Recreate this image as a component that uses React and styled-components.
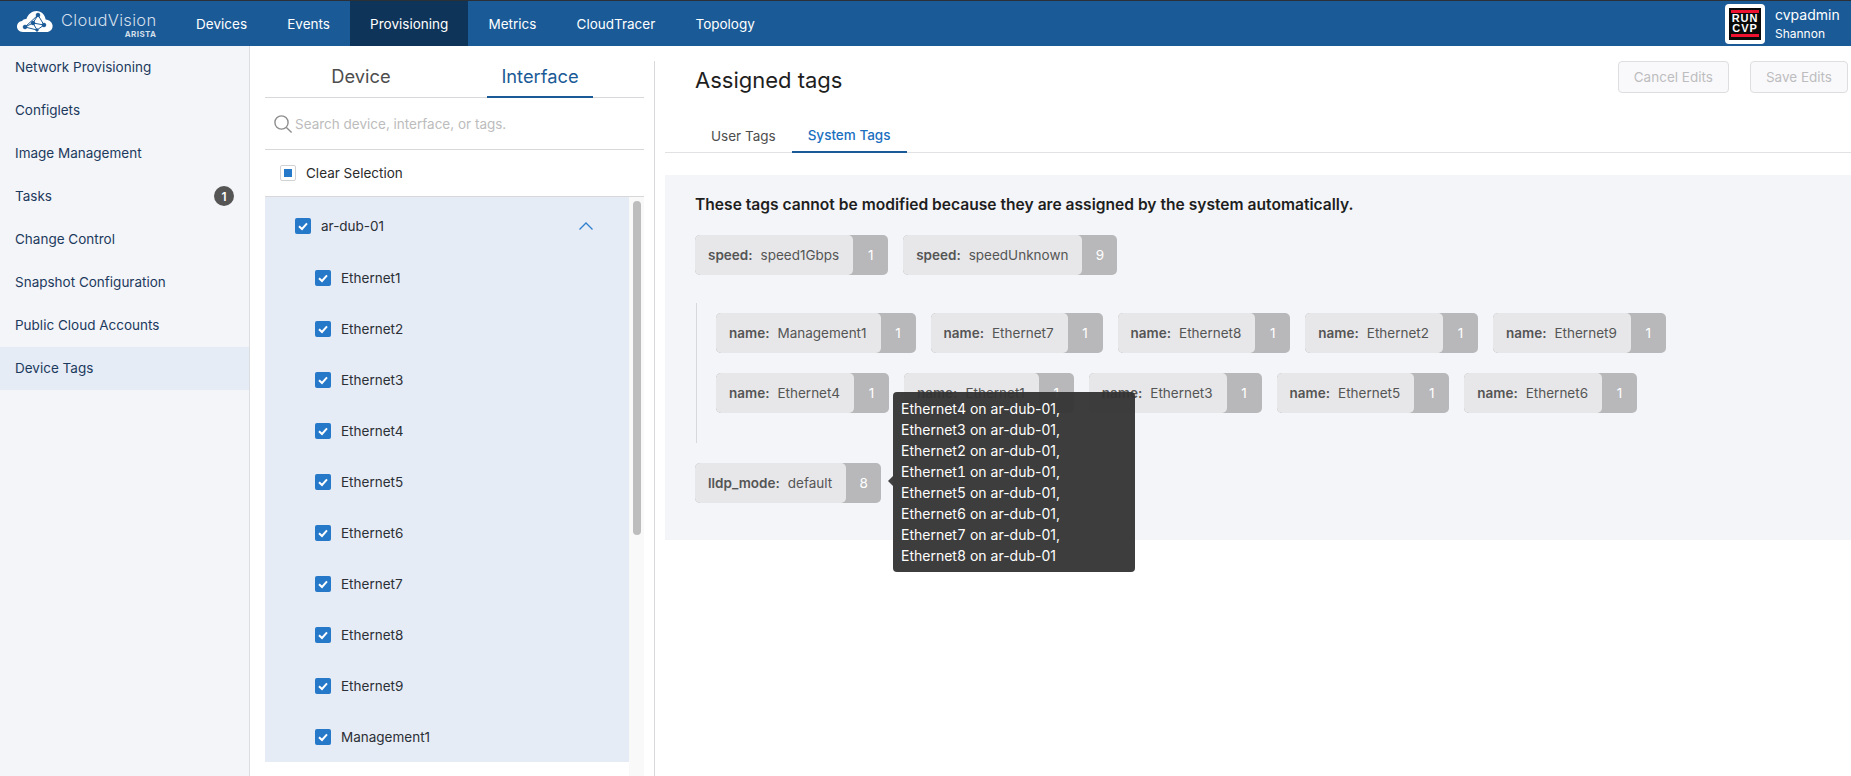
import React from "react";
import styled, { createGlobalStyle } from "styled-components";

const GlobalStyle = createGlobalStyle`
    * {
        box-sizing: border-box;
    }

    body {
        margin: 0;
        background: #fff;
        font-family: Inter, "Liberation Sans", sans-serif;
        overflow: hidden;
    }
`;

const Page = styled.div`
    width: 1851px;
    height: 776px;
    display: flex;
    flex-direction: column;
    overflow: hidden;
`;

const TopBar = styled.header`
    height: 46px;
    flex: none;
    display: flex;
    align-items: stretch;
    background: #1a5a96;
    border-top: 1px solid #2b2f36;
`;

const Logo = styled.div`
    width: 176px;
    flex: none;
    display: flex;
    padding: 9px 0 0 17px;
    gap: 8px;
`;

const LogoText = styled.div`
    display: flex;
    flex-direction: column;
    align-items: flex-end;
    color: #d3dfeb;

    .cloud {
        font-size: 16.5px;
        font-weight: 300;
        line-height: 20px;
        letter-spacing: 0.3px;
    }

    .arista {
        font-size: 8px;
        font-weight: 700;
        line-height: 8px;
        letter-spacing: 0.4px;
    }
`;

const NavItem = styled.a`
    display: flex;
    align-items: center;
    padding: 0 20.1px;
    color: #fff;
    font-size: 13.5px;
    background: ${(props) => (props.$active ? "#0f3459" : "transparent")};
`;

const User = styled.div`
    margin-left: auto;
    width: 126px;
    display: flex;
    align-items: center;
    gap: 10px;
    color: #fff;
`;

const Avatar = styled.div`
    width: 40px;
    height: 40px;
    border-radius: 4px;
    background: #fff;
    padding: 4px;
    flex: none;
`;

const AvatarInner = styled.div`
    width: 100%;
    height: 100%;
    background: #0a0a0a;
    padding: 2px;
    display: flex;
    flex-direction: column;
    align-items: center;
    justify-content: space-between;
    font-family: "Liberation Sans", sans-serif;
    font-size: 11px;
    font-weight: 700;
    line-height: 9px;
    letter-spacing: 0.9px;

    i {
        display: block;
        flex: none;
        width: 100%;
        height: 3px;
        background: #ee1230;
    }
`;

const UserName = styled.div`
    font-size: 14px;
    line-height: 19px;
`;

const UserOrg = styled.div`
    font-size: 12px;
    line-height: 19px;
`;

const Body = styled.div`
    flex: 1;
    min-height: 0;
    display: flex;
`;

const SideNav = styled.nav`
    width: 250px;
    flex: none;
    background: #f4f5f8;
    border-right: 1px solid #dcdde0;
`;

const SideItem = styled.div`
    height: 43px;
    display: flex;
    align-items: center;
    justify-content: space-between;
    padding: 0 15px 1px;
    color: #1c3a5e;
    font-size: 13.5px;
    background: ${(props) => (props.$active ? "#e6ecf5" : "transparent")};
`;

const Badge = styled.span`
    width: 20px;
    height: 20px;
    border-radius: 50%;
    background: #555;
    color: #fff;
    font-size: 12px;
    font-weight: 600;
    display: flex;
    align-items: center;
    justify-content: center;
`;

const Picker = styled.section`
    width: 405px;
    flex: none;
    margin-top: 15px;
    padding: 0 10px 0 15px;
    border-right: 1px solid #d8d8da;
    display: flex;
    flex-direction: column;
`;

const PickerTabs = styled.div`
    height: 37px;
    flex: none;
    display: flex;
    border-bottom: 1px solid #d8d8da;
    padding-left: 43px;
`;

const PickerTab = styled.div`
    width: 106px;
    margin-right: 73px;
    height: 37px;
    text-align: center;
    font-size: 18.3px;
    line-height: 30px;
    color: ${(props) => (props.$active ? "#1a5a96" : "#4d4d4d")};
    border-bottom: ${(props) => (props.$active ? "2px solid #1a5a96" : "none")};

    &:last-child {
        margin-right: 0;
    }
`;

const SearchRow = styled.div`
    height: 52px;
    flex: none;
    display: flex;
    align-items: center;
    gap: 2px;
    padding-left: 8px;
    border-bottom: 1px solid #d8d8da;
    color: #bcbcbc;
    font-size: 13.5px;
`;

const ClearRow = styled.div`
    height: 47px;
    flex: none;
    display: flex;
    align-items: center;
    gap: 10px;
    padding: 0 0 1px 15px;
    border-bottom: 1px solid #d8d8da;
    color: #2b2b2b;
    font-size: 13.5px;
`;

const PartialBox = styled.span`
    width: 16px;
    height: 16px;
    background: #fff;
    border: 1px solid #d2d2d4;
    border-radius: 2px;
    display: flex;
    align-items: center;
    justify-content: center;

    &::after {
        content: "";
        width: 8px;
        height: 8px;
        background: #2678c8;
    }
`;

const ListArea = styled.div`
    flex: none;
    display: flex;
    height: 579px;
`;

const List = styled.div`
    width: 364px;
    height: 565px;
    background: #e6ecf5;
    flex: none;
`;

const HostRow = styled.div`
    height: 55px;
    display: flex;
    align-items: center;
    gap: 10px;
    padding: 3px 36px 0 30px;
    color: #2b2f36;
    font-size: 13.5px;

    svg:last-child {
        margin-left: auto;
    }
`;

const PortRow = styled.div`
    height: 51px;
    display: flex;
    align-items: center;
    gap: 10px;
    padding-left: 50px;
    color: #2b2f36;
    font-size: 13.5px;
`;

const Track = styled.div`
    width: 15px;
    flex: none;
    background: #f9f9fa;
    padding: 4px 3px 0 4px;
`;

const Thumb = styled.div`
    height: 334px;
    border-radius: 4px;
    background: #bdbdbd;
`;

const Main = styled.main`
    flex: 1;
    min-width: 0;
    padding: 15px 0 0 10px;
`;

const TitleRow = styled.div`
    height: 38px;
    display: flex;
    align-items: center;
    padding: 0 3px 0 30px;
    gap: 21px;
`;

const Title = styled.h1`
    margin: 0 auto 0 0;
    font-size: 22px;
    font-weight: 400;
    color: #1e1e1e;
`;

const GhostButton = styled.button`
    height: 32px;
    margin-bottom: 7px;
    padding: 0 15px;
    border: 1px solid #dedee0;
    border-radius: 4px;
    background: #f9f9fb;
    color: #bdbdbf;
    font-family: inherit;
    font-size: 13.5px;
`;

const TabBar = styled.div`
    height: 41px;
    margin-top: 13px;
    padding-left: 30px;
    display: flex;
    border-bottom: 1px solid #e2e2e4;
`;

const Tab = styled.div`
    height: 41px;
    padding: 7px 16px 0;
    display: flex;
    align-items: center;
    font-size: 13.5px;
    color: ${(props) => (props.$active ? "#1a6fc0" : "#4d4d4d")};
    border-bottom: ${(props) => (props.$active ? "2px solid #1a5a96" : "none")};
    font-weight: ${(props) => (props.$active ? 500 : 400)};
`;

const Panel = styled.div`
    position: relative;
    height: 365px;
    margin-top: 22px;
    padding: 20px 30px 0;
    background: #f4f5f8;
`;

const Notice = styled.p`
    margin: 0 0 20px;
    font-size: 15.6px;
    font-weight: 600;
    line-height: 20px;
    color: #1e1e1e;
`;

const ChipRow = styled.div`
    display: flex;
    gap: 15px;
`;

const Group = styled.div`
    margin: 28px 0 20px 1px;
    height: 140px;
    padding: 10px 0 0 19px;
    border-left: 1px solid #d8d8da;
    display: flex;
    flex-direction: column;
    gap: 20px;
`;

const Chip = styled.div`
    height: 40px;
    display: inline-flex;
    border-radius: 5px;
    background: #b8b8ba;
    color: #555;
    font-size: 13.5px;
    overflow: hidden;
`;

const ChipLabel = styled.span`
    display: flex;
    align-items: center;
    padding: 0 14px 0 13px;
    border-radius: 5px;
    background: #e7e7e9;

    b {
        font-weight: 600;
        margin-right: 8px;
    }
`;

const Count = styled.span`
    width: 35px;
    color: #fff;
    display: flex;
    align-items: center;
    justify-content: center;
`;

const Tooltip = styled.div`
    position: absolute;
    left: 228px;
    top: 217px;
    width: 242px;
    height: 180px;
    padding: 6px 8px;
    border-radius: 4px;
    background: rgba(51, 51, 51, 0.95);
    color: #fff;
    font-size: 14px;
    line-height: 21px;

    &::before {
        content: "";
        position: absolute;
        left: -5px;
        top: 84px;
        border-style: solid;
        border-width: 5px 5px 5px 0;
        border-color: transparent #404040 transparent transparent;
    }
`;

const TooltipDigit = styled.span`
    font-variant-numeric: tabular-nums;
`;

const Check = () => (
    <svg width="16" height="16" viewBox="0 0 16 16" style={{ flex: "none" }}>
        <rect width="16" height="16" rx="2" fill="#2678c8" />
        <path d="M4 8.2 L7 11 L12 5.4" fill="none" stroke="#fff" strokeWidth="2" />
    </svg>
);

const SearchIcon = () => (
    <svg width="20" height="20" viewBox="0 0 20 20" fill="none" stroke="#8e8e8e" strokeWidth="1.4">
        <circle cx="8.5" cy="8.5" r="6.6" />
        <path d="M13.4 13.4 L18.6 18.6" />
    </svg>
);

const Chevron = () => (
    <svg width="14" height="8" viewBox="0 0 14 8" fill="none" stroke="#2f7fcf" strokeWidth="1.3">
        <path d="M0.5 7.5 L7 1 L13.5 7.5" />
    </svg>
);

const CloudLogo = () => (
    <svg width="36" height="24" viewBox="0 0 36 24" style={{ flex: "none" }}>
        <path
            d="M6 22 C1.5 22 0 18.8 0 16.5 C0 13.5 2.3 11.2 5 11 C6 9.5 7.6 8.8 9.4 9 C11 4 15 1 19.5 1 C24.5 1 28 4.8 28.6 9.4 C32.6 9.8 35.6 12.6 35.6 16 C35.6 19.5 33 22 29.5 22 Z"
            fill="#fff"
        />
        <g stroke="#1a5a96" strokeWidth="1" fill="#1a5a96">
            <path d="M8 17 L16 13 L21 5 L27 15 L16 13 M21 5 L8 17 M16 13 L20 20 L27 15 M8 17 L20 20" fill="none" />
            <circle cx="8" cy="17" r="1.8" />
            <circle cx="16" cy="13" r="1.8" />
            <circle cx="21" cy="5" r="1.8" />
            <circle cx="27" cy="15" r="1.8" />
            <circle cx="20" cy="20" r="1.2" />
        </g>
    </svg>
);

const navItems = ["Devices", "Events", "Provisioning", "Metrics", "CloudTracer", "Topology"];

const sideItems = [
    "Network Provisioning",
    "Configlets",
    "Image Management",
    "Tasks",
    "Change Control",
    "Snapshot Configuration",
    "Public Cloud Accounts",
    "Device Tags",
];

const ports = [
    "Ethernet1",
    "Ethernet2",
    "Ethernet3",
    "Ethernet4",
    "Ethernet5",
    "Ethernet6",
    "Ethernet7",
    "Ethernet8",
    "Ethernet9",
    "Management1",
];

const nameRows = [
    ["Management1", "Ethernet7", "Ethernet8", "Ethernet2", "Ethernet9"],
    ["Ethernet4", "Ethernet1", "Ethernet3", "Ethernet5", "Ethernet6"],
];

const tooltipPorts = [4, 3, 2, 1, 5, 6, 7, 8];

function Tag({ name, value, count }) {
    return (
        <Chip>
            <ChipLabel>
                <b>{name}:</b>
                {value}
            </ChipLabel>
            <Count>{count}</Count>
        </Chip>
    );
}

function App() {
    return (
        <Page>
            <GlobalStyle />
            <TopBar>
                <Logo>
                    <CloudLogo />
                    <LogoText>
                        <span className="cloud">CloudVision</span>
                        <span className="arista">ARISTA</span>
                    </LogoText>
                </Logo>
                {navItems.map((item) => (
                    <NavItem key={item} $active={item === "Provisioning"}>
                        {item}
                    </NavItem>
                ))}
                <User>
                    <Avatar>
                        <AvatarInner>
                            <i />
                            <span>RUN</span>
                            <span>CVP</span>
                            <i />
                        </AvatarInner>
                    </Avatar>
                    <div>
                        <UserName>cvpadmin</UserName>
                        <UserOrg>Shannon</UserOrg>
                    </div>
                </User>
            </TopBar>
            <Body>
                <SideNav>
                    {sideItems.map((item) => (
                        <SideItem key={item} $active={item === "Device Tags"}>
                            {item}
                            {item === "Tasks" ? <Badge>1</Badge> : null}
                        </SideItem>
                    ))}
                </SideNav>
                <Picker>
                    <PickerTabs>
                        <PickerTab>Device</PickerTab>
                        <PickerTab $active>Interface</PickerTab>
                    </PickerTabs>
                    <SearchRow>
                        <SearchIcon />
                        Search device, interface, or tags.
                    </SearchRow>
                    <ClearRow>
                        <PartialBox />
                        Clear Selection
                    </ClearRow>
                    <ListArea>
                        <List>
                            <HostRow>
                                <Check />
                                ar-dub-01
                                <Chevron />
                            </HostRow>
                            {ports.map((port) => (
                                <PortRow key={port}>
                                    <Check />
                                    {port}
                                </PortRow>
                            ))}
                        </List>
                        <Track>
                            <Thumb />
                        </Track>
                    </ListArea>
                </Picker>
                <Main>
                    <TitleRow>
                        <Title>Assigned tags</Title>
                        <GhostButton>Cancel Edits</GhostButton>
                        <GhostButton>Save Edits</GhostButton>
                    </TitleRow>
                    <TabBar>
                        <Tab>User Tags</Tab>
                        <Tab $active>System Tags</Tab>
                    </TabBar>
                    <Panel>
                        <Notice>
                            These tags cannot be modified because they are assigned by the system automatically.
                        </Notice>
                        <ChipRow>
                            <Tag name="speed" value="speed1Gbps" count="1" />
                            <Tag name="speed" value="speedUnknown" count="9" />
                        </ChipRow>
                        <Group>
                            {nameRows.map((row) => (
                                <ChipRow key={row[0]}>
                                    {row.map((port) => (
                                        <Tag key={port} name="name" value={port} count="1" />
                                    ))}
                                </ChipRow>
                            ))}
                        </Group>
                        <Tag name="lldp_mode" value="default" count="8" />
                        <Tooltip>
                            {tooltipPorts.map((n, i) => (
                                <div key={n}>
                                    Ethernet<TooltipDigit>{n}</TooltipDigit> on ar-dub-01
                                    {i < tooltipPorts.length - 1 ? "," : ""}
                                </div>
                            ))}
                        </Tooltip>
                    </Panel>
                </Main>
            </Body>
        </Page>
    );
}

export default App;
